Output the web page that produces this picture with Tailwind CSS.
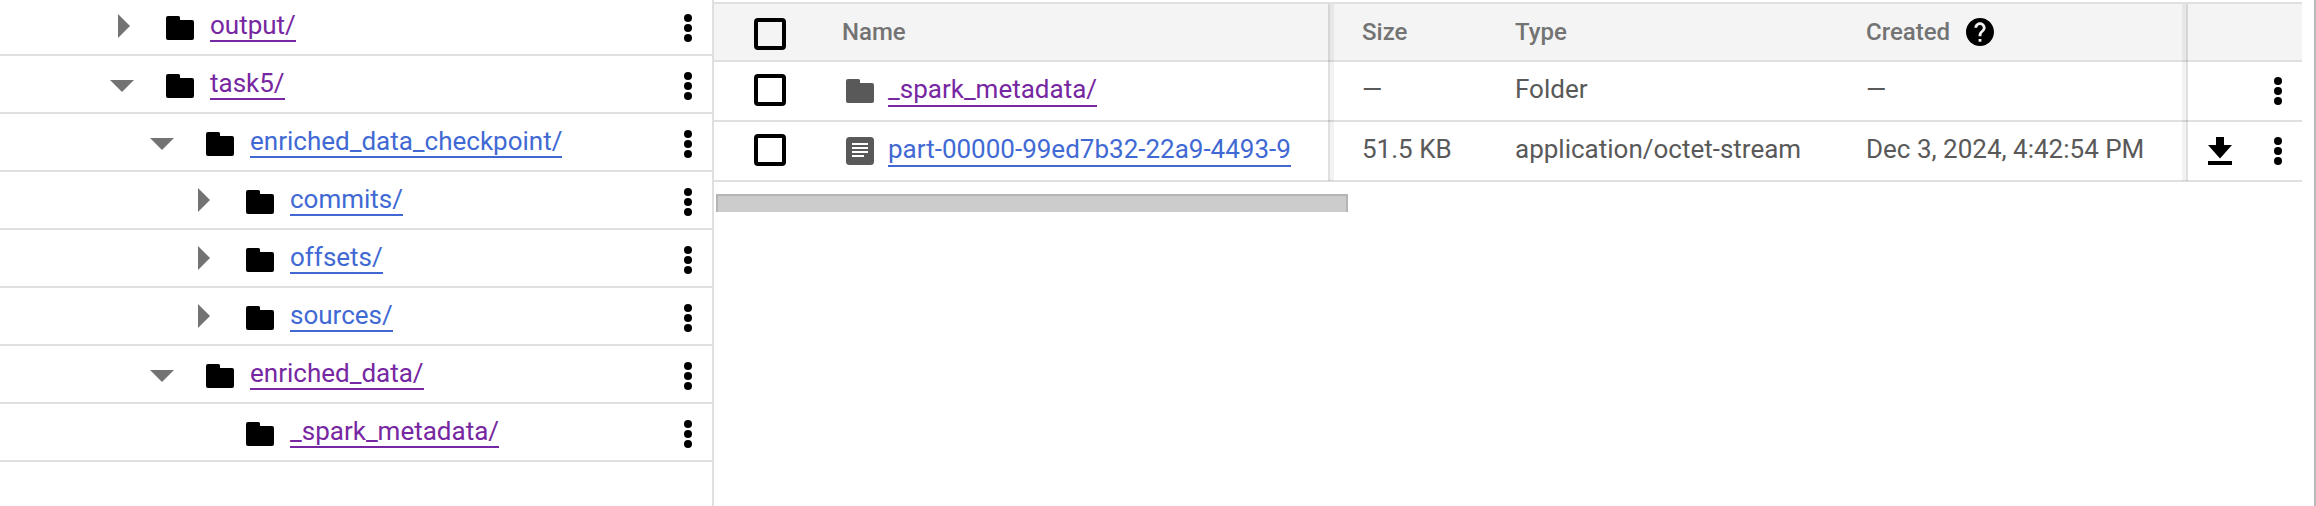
<!DOCTYPE html>
<html lang="en">
<head>
<meta charset="utf-8">
<title>Bucket browser</title>
<script src="https://cdn.jsdelivr.net/npm/@tailwindcss/browser@4"></script>
</head>
<body class="bg-white font-['Roboto',sans-serif] text-[26px] leading-[30px] text-[#595959]">
<svg class="hidden">
  <symbol id="folder" viewBox="0 0 28 24"><path d="M2 0H12.500Q14 0 14 1.500V4H26Q28 4 28 6V22Q28 24 26 24H2Q0 24 0 22V2Q0 0 2 0Z"/></symbol>
  <symbol id="right" viewBox="0 0 24 24"><path d="M8 0L20 12L8 24Z"/></symbol>
  <symbol id="down" viewBox="0 0 24 24"><path d="M0 8H24L12 20Z"/></symbol>
  <symbol id="dots" viewBox="0 0 8 28"><circle cx="4" cy="4" r="4"/><circle cx="4" cy="14" r="4"/><circle cx="4" cy="24" r="4"/></symbol>
</svg>
<div class="flex h-[506px] w-[2316px] overflow-hidden">
  <nav class="w-[714px] shrink-0 border-r-2 border-[#e0e0e0]">
    <div class="-mt-0.5">
      <div class="flex h-[58px] items-center border-b-2 border-[#e0e0e0] pr-5 pl-[110px]">
        <svg class="size-6 fill-[#737373]"><use href="#right"/></svg>
        <svg class="mt-1 ml-8 h-6 w-7"><use href="#folder"/></svg>
        <a class="ml-4 border-b-2 text-[#7627a1]">output/</a>
        <svg class="mt-1 ml-auto h-7 w-2"><use href="#dots"/></svg>
      </div>
      <div class="flex h-[58px] items-center border-b-2 border-[#e0e0e0] pr-5 pl-[110px]">
        <svg class="size-6 fill-[#737373]"><use href="#down"/></svg>
        <svg class="mt-1 ml-8 h-6 w-7"><use href="#folder"/></svg>
        <a class="ml-4 border-b-2 text-[#7627a1]">task5/</a>
        <svg class="mt-1 ml-auto h-7 w-2"><use href="#dots"/></svg>
      </div>
      <div class="flex h-[58px] items-center border-b-2 border-[#e0e0e0] pr-5 pl-[150px]">
        <svg class="size-6 fill-[#737373]"><use href="#down"/></svg>
        <svg class="mt-1 ml-8 h-6 w-7"><use href="#folder"/></svg>
        <a class="ml-4 border-b-2 text-[#4169d4]">enriched_data_checkpoint/</a>
        <svg class="mt-1 ml-auto h-7 w-2"><use href="#dots"/></svg>
      </div>
      <div class="flex h-[58px] items-center border-b-2 border-[#e0e0e0] pr-5 pl-[190px]">
        <svg class="size-6 fill-[#737373]"><use href="#right"/></svg>
        <svg class="mt-1 ml-8 h-6 w-7"><use href="#folder"/></svg>
        <a class="ml-4 border-b-2 text-[#4169d4]">commits/</a>
        <svg class="mt-1 ml-auto h-7 w-2"><use href="#dots"/></svg>
      </div>
      <div class="flex h-[58px] items-center border-b-2 border-[#e0e0e0] pr-5 pl-[190px]">
        <svg class="size-6 fill-[#737373]"><use href="#right"/></svg>
        <svg class="mt-1 ml-8 h-6 w-7"><use href="#folder"/></svg>
        <a class="ml-4 border-b-2 text-[#4169d4]">offsets/</a>
        <svg class="mt-1 ml-auto h-7 w-2"><use href="#dots"/></svg>
      </div>
      <div class="flex h-[58px] items-center border-b-2 border-[#e0e0e0] pr-5 pl-[190px]">
        <svg class="size-6 fill-[#737373]"><use href="#right"/></svg>
        <svg class="mt-1 ml-8 h-6 w-7"><use href="#folder"/></svg>
        <a class="ml-4 border-b-2 text-[#4169d4]">sources/</a>
        <svg class="mt-1 ml-auto h-7 w-2"><use href="#dots"/></svg>
      </div>
      <div class="flex h-[58px] items-center border-b-2 border-[#e0e0e0] pr-5 pl-[150px]">
        <svg class="size-6 fill-[#737373]"><use href="#down"/></svg>
        <svg class="mt-1 ml-8 h-6 w-7"><use href="#folder"/></svg>
        <a class="ml-4 border-b-2 text-[#7627a1]">enriched_data/</a>
        <svg class="mt-1 ml-auto h-7 w-2"><use href="#dots"/></svg>
      </div>
      <div class="flex h-[58px] items-center border-b-2 border-[#e0e0e0] pr-5 pl-[246px]">
        <svg class="mt-1 h-6 w-7"><use href="#folder"/></svg>
        <a class="ml-4 border-b-2 text-[#7627a1]">_spark_metadata/</a>
        <svg class="mt-1 ml-auto h-7 w-2"><use href="#dots"/></svg>
      </div>
    </div>
  </nav>
  <main class="w-[1588px] shrink-0 pt-0.5">
    <div class="relative border-t-2 border-[#e0e0e0]">
      <div class="grid h-[58px] grid-cols-[128px_520px_153px_351px_322px_114px] items-start border-b-2 border-[#e0e0e0] bg-[#f4f4f4] font-medium text-[#737373]">
        <span class="mt-3.5 ml-10 size-8 rounded-[4px] border-4 border-black"></span>
        <span class="pt-[13px] text-2xl/[30px]">Name</span>
        <span class="pt-[13px] text-2xl/[30px]">Size</span>
        <span class="pt-[13px] text-2xl/[30px]">Type</span>
        <span class="flex pt-[13px] text-2xl/[30px]">Created
          <svg class="mt-px ml-4 size-7" viewBox="2 2 20 20"><path d="M12 2C6.480 2 2 6.480 2 12s4.480 10 10 10 10-4.480 10-10S17.520 2 12 2zm1 17h-2v-2h2v2zm2.070-7.750l-.9.920C13.450 12.900 13 13.500 13 15h-2v-.5c0-1.100.450-2.100 1.170-2.830l1.240-1.260c.370-.360.590-.860.590-1.410 0-1.100-.9-2-2-2s-2 .9-2 2H8c0-2.210 1.790-4 4-4s4 1.790 4 4c0 .880-.360 1.680-.930 2.250z" fill="#000"/></svg>
        </span>
      </div>
      <div class="grid h-[60px] grid-cols-[128px_520px_153px_351px_322px_114px] items-start border-b-2 border-[#e0e0e0]">
        <span class="mt-3 ml-10 size-8 rounded-[4px] border-4 border-black"></span>
        <span class="flex items-start pl-1">
          <svg class="mt-[17px] h-6 w-7 fill-[#595959]"><use href="#folder"/></svg>
          <a class="mt-3 ml-3.5 border-b-2 pb-px text-[#7627a1]">_spark_metadata/</a>
        </span>
        <span class="pt-3">—</span>
        <span class="pt-3">Folder</span>
        <span class="pt-3">—</span>
        <span class="flex justify-end pt-[15px] pr-5"><svg class="h-7 w-2"><use href="#dots"/></svg></span>
      </div>
      <div class="grid h-[60px] grid-cols-[128px_520px_153px_351px_322px_114px] items-start border-b-2 border-[#e0e0e0]">
        <span class="mt-3 ml-10 size-8 rounded-[4px] border-4 border-black"></span>
        <span class="flex items-start pl-1">
          <svg class="mt-[15px] size-7" viewBox="0 0 28 28"><rect width="28" height="28" rx="3.500" fill="#595959"/><path d="M6 7H22M6 11H22M6 15H22M6 19H18" stroke="#fff" stroke-width="2"/></svg>
          <a class="mt-3 ml-3.5 border-b-2 pb-px text-[#4169d4]">part-00000-99ed7b32-22a9-4493-9</a>
        </span>
        <span class="pt-3">51.5 KB</span>
        <span class="pt-3">application/octet-stream</span>
        <span class="pt-3">Dec 3, 2024, 4:42:54 PM</span>
        <span class="flex justify-between pt-[15px] pr-5 pl-5">
          <svg class="h-7 w-6" viewBox="0 0 24 28"><path d="M8 0H16V8H24L12 21.500L0 8H8ZM0 24H24V28H0Z"/></svg>
          <svg class="h-7 w-2"><use href="#dots"/></svg>
        </span>
      </div>
      <!-- edges of the pinned columns, laid over the rows -->
      <div class="absolute top-0 bottom-px left-[614px] flex"><i class="w-0.5 bg-black/12"></i><i class="w-1 bg-black/5"></i></div>
      <div class="absolute top-0 bottom-px left-[1468px] flex"><i class="w-1 bg-black/5"></i><i class="w-0.5 bg-black/12"></i></div>
    </div>
    <div class="mt-3 ml-0.5 h-[18px] w-[632px] border-x-2 border-t-2 border-[#b5b5b5] bg-[#ccc]"></div>
  </main>
  <div class="ml-auto w-0.5 bg-[#b9b9b9]"></div>
</div>
</body>
</html>
